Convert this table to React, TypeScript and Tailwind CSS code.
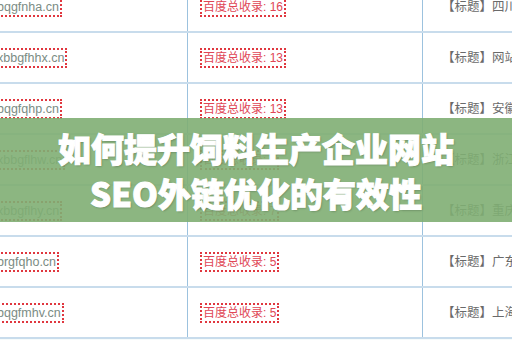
import React from "react";

const rows = [
  { d: "bqgfnha.cn", n: "16", t: "四川新闻网站" },
  { d: "xbbgfhhx.cn", n: "13", t: "网站建设公司" },
  { d: "bqgfqhp.cn", n: "13", t: "安徽新闻网" },
  { d: "xbbgflhw.cn", n: "9", t: "浙江新闻网" },
  { d: "xbbgflhy.cn", n: "7", t: "重庆新闻网" },
  { d: "brgfqho.cn", n: "5", t: "广东新闻网" },
  { d: "bqgfmhv.cn", n: "5", t: "上海新闻网" },
];

export default function App() {
  return (
    <div className="relative w-[512px] h-[340px] overflow-hidden bg-[#f6fbfb]">
      <div className="flex flex-col mt-[-18px] bg-white">
        {rows.map((r, i) => (
          <div
            key={i}
            className="grid grid-cols-[188px_235px_1fr] h-[51px] border-b-2 border-[#c8dcec]"
          >
            <div className="flex items-center border-r border-[#9cc2de] overflow-hidden">
              <span className="ml-[-6px] px-[1px] border-2 border-dotted border-[#e0373f] text-[12.5px] leading-[16px] text-[#7b8c84] font-['Liberation_Sans',sans-serif] whitespace-nowrap">
                {r.d}
              </span>
            </div>
            <div className="flex items-center pl-[12px] border-r border-[#9cc2de]">
              <span className="px-[1px] border-2 border-dotted border-[#e0373f] text-[12px] leading-[16px] text-[#e04656] font-['Liberation_Sans','Noto_Sans_CJK_SC',sans-serif] whitespace-nowrap">
                百度总收录: {r.n}
              </span>
            </div>
            <div className="flex items-center pl-[19px] overflow-hidden">
              <span className="text-[12.5px] text-[#6a6a6a] font-['Noto_Sans_CJK_SC',sans-serif] whitespace-nowrap">
                【标题】{r.t}
              </span>
            </div>
          </div>
        ))}
      </div>
      <div className="absolute left-0 right-0 top-[118px] h-[104px] bg-[#7fae73]/90 flex flex-col items-center pt-[8px]">
        <div className="text-white font-black text-[33px] leading-[45px] font-['Noto_Sans_CJK_SC',sans-serif] [-webkit-text-stroke:1px_white] [text-shadow:1px_1px_2px_rgba(0,0,0,0.25)] whitespace-nowrap">
          如何提升饲料生产企业网站
        </div>
        <div className="text-white font-black text-[33px] leading-[45px] font-['Noto_Sans_CJK_SC',sans-serif] [-webkit-text-stroke:1px_white] [text-shadow:1px_1px_2px_rgba(0,0,0,0.25)] whitespace-nowrap">
          SEO外链优化的有效性
        </div>
      </div>
    </div>
  );
}
